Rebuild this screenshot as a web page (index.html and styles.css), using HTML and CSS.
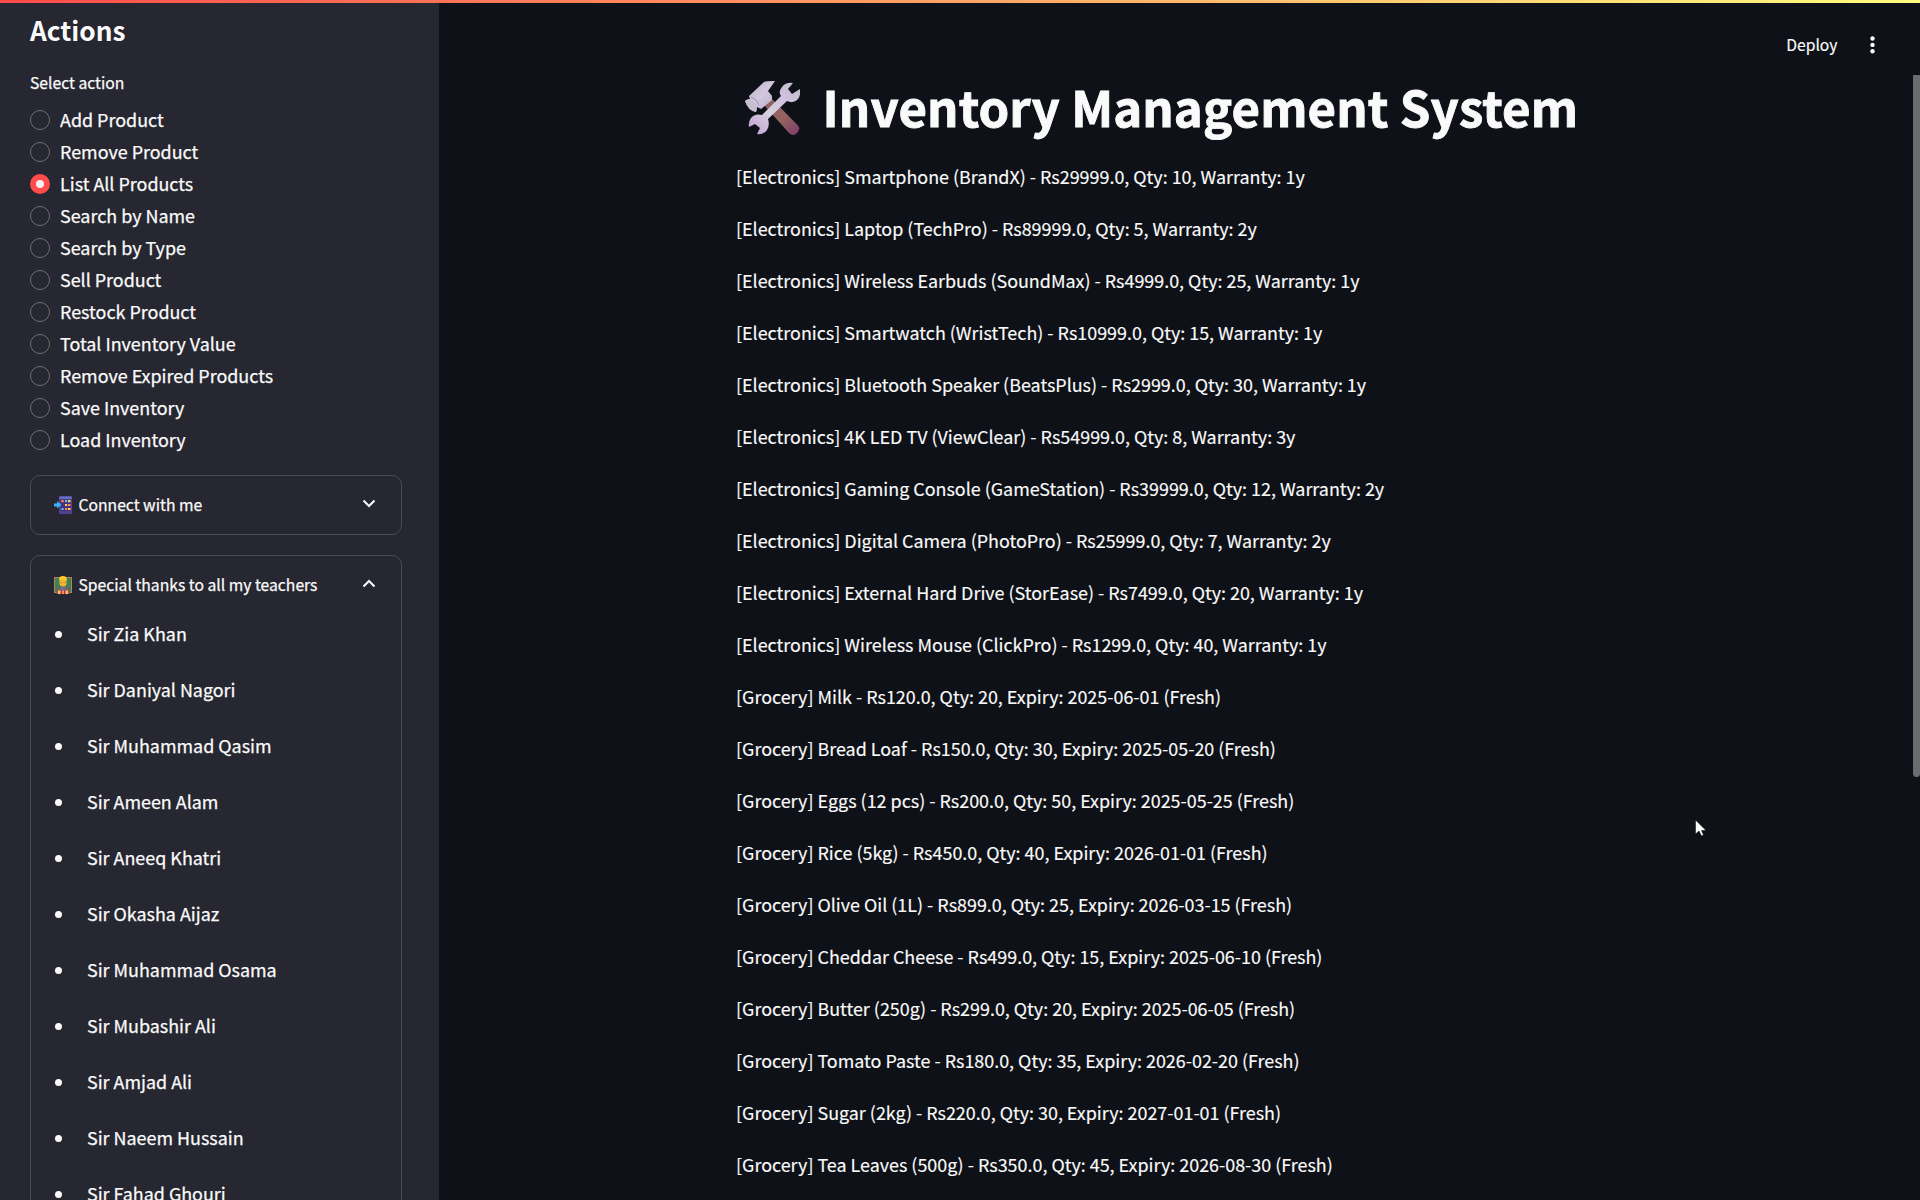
FILE: index.html
```html
<!DOCTYPE html>
<html lang="en">
<head>
<meta charset="utf-8">
<title>Inventory Management System</title>
<link rel="stylesheet" href="styles.css">
</head>
<body>
<div class="decoration"></div>
<div class="app">
  <aside class="sidebar">
    <h2 class="sidebar-title">Actions</h2>
    <p class="field-label">Select action</p>
    <div class="radios">
      <label class="radio"><i class="dot"></i><span>Add Product</span></label>
      <label class="radio"><i class="dot"></i><span>Remove Product</span></label>
      <label class="radio"><i class="dot checked"></i><span>List All Products</span></label>
      <label class="radio"><i class="dot"></i><span>Search by Name</span></label>
      <label class="radio"><i class="dot"></i><span>Search by Type</span></label>
      <label class="radio"><i class="dot"></i><span>Sell Product</span></label>
      <label class="radio"><i class="dot"></i><span>Restock Product</span></label>
      <label class="radio"><i class="dot"></i><span>Total Inventory Value</span></label>
      <label class="radio"><i class="dot"></i><span>Remove Expired Products</span></label>
      <label class="radio"><i class="dot"></i><span>Save Inventory</span></label>
      <label class="radio"><i class="dot"></i><span>Load Inventory</span></label>
    </div>
    <section class="expander">
      <div class="summary">
        <svg class="emoji" viewBox="0 0 18 18">
          <rect x="5" y="0" width="13" height="18" rx="1" fill="#54408f"/>
          <rect x="5.5" y="0.5" width="12" height="2.5" fill="#6470c4"/>
          <rect x="7" y="3.5" width="10" height="11.5" fill="#43317c"/>
          <path fill="#ff8a4c" d="M7.5 4h2.2v2.2H7.5zM14 8h2.5v2H14zM11 12h2.2v2H11z"/>
          <path fill="#ffd05a" d="M14 4h2.5v2.2H14zM11 8h2.2v2H11zM14 12h2.5v2H14z"/>
          <path fill="#54bdf5" d="M11 4h2.2v2.2H11zM7.5 12h2.2v2H7.5z"/>
          <path fill="#36b3f5" d="M0 7.500h3V5l4.500 4L3 12.500V10.500H0z"/>
        </svg>
        <span class="summary-text">Connect with me</span>
        <svg class="chevron" viewBox="0 0 14 9"><path d="M1.500 1.500 7 7l5.500-5.500"/></svg>
      </div>
    </section>
    <section class="expander open">
      <div class="summary">
        <svg class="emoji" viewBox="0 0 18 18">
          <rect x="0.5" y="1.500" width="17" height="15" fill="#388354" stroke="#bd7d59"/>
          <path d="M2.500 18v-4q0-3 4-3.500h5q4 .5 4 3.500v4z" fill="#815b61"/>
          <path d="M6 11h6l-1 4H7z" fill="#68738f"/>
          <rect x="5.500" y="2" width="7" height="8.500" rx="3.200" fill="#f5b52e"/>
          <path d="M5 5Q4.500 0 9 0t4 5L12 3.500H6z" fill="#ffc928"/>
          <path d="M6 6h2.500v1.200H6zM9.500 6H12v1.200H9.500z" fill="#cf9540"/>
          <path d="M6.500 14.500h5V18h-5z" fill="#d51480"/>
          <path d="M4 14.500h2.500V18H4zM8.300 14.500h1.400V18H8.300zM11.500 14.500H14V18h-2.500z" fill="#ffcb40"/>
        </svg>
        <span class="summary-text">Special thanks to all my teachers</span>
        <svg class="chevron" viewBox="0 0 14 9"><path d="M1.500 7.500 7 2l5.500 5.500"/></svg>
      </div>
      <ul class="teachers">
        <li><span>Sir Zia Khan</span></li>
        <li><span>Sir Daniyal Nagori</span></li>
        <li><span>Sir Muhammad Qasim</span></li>
        <li><span>Sir Ameen Alam</span></li>
        <li><span>Sir Aneeq Khatri</span></li>
        <li><span>Sir Okasha Aijaz</span></li>
        <li><span>Sir Muhammad Osama</span></li>
        <li><span>Sir Mubashir Ali</span></li>
        <li><span>Sir Amjad Ali</span></li>
        <li><span>Sir Naeem Hussain</span></li>
        <li><span>Sir Fahad Ghouri</span></li>
      </ul>
    </section>
  </aside>
  <main class="main">
    <header class="toolbar">
      <span class="deploy">Deploy</span>
      <svg class="kebab" viewBox="0 0 5 18"><circle cx="2.500" cy="2.500" r="2.200"/><circle cx="2.500" cy="8.900" r="2.200"/><circle cx="2.500" cy="15.300" r="2.200"/></svg>
    </header>
    <div class="content">
      <h1 class="title">
        <svg class="tools" viewBox="0 0 56 56">
          <defs>
            <linearGradient id="handle" x1="0" y1="0" x2="1" y2="1"><stop offset="0" stop-color="#8c6164"/><stop offset=".55" stop-color="#94645f"/><stop offset="1" stop-color="#7d3b69"/></linearGradient>
            <linearGradient id="steel" x1="0" y1="0" x2="1" y2="1"><stop offset="0" stop-color="#b5aec3"/><stop offset=".5" stop-color="#d3c9de"/><stop offset="1" stop-color="#b9a4c9"/></linearGradient>
            <linearGradient id="wrench" x1="1" y1="0" x2="0" y2="1"><stop offset="0" stop-color="#c1bec8"/><stop offset=".3" stop-color="#d0c0df"/><stop offset=".6" stop-color="#d7d2df"/><stop offset="1" stop-color="#c09ad3"/></linearGradient>
          </defs>
          <path d="M19 24 26 17 54 45.500Q57 49 53 53t-8 0z" fill="url(#handle)"/>
          <path d="M20 2Q22 1 31 1L24 11l4 5v4L17 29l-4-2-1 5Q5 30 1 21l5-2-1-3z" fill="url(#steel)"/>
          <path d="M1 21q4-4 8 0t4 8l-1 3Q4 31 1 21z" fill="#c6bfd0"/>
          <path d="M7 17q6 2 8 8" fill="none" stroke="#9c94ac"/>
          <path d="M49 3Q42 2 38 7q-4 5-1 9L18 35q-7-2-11 3-3 4-2 9l6-3 5 4-3 6q7 1 10-4t1-11L43 21q7 3 11-2 3-4 2-10l-8 5-4-5z" fill="url(#wrench)"/>
        </svg>
        <span class="title-text">Inventory Management System</span>
      </h1>
      <div class="products">
        <p>[Electronics] Smartphone (BrandX) - Rs29999.0, Qty: 10, Warranty: 1y</p>
        <p>[Electronics] Laptop (TechPro) - Rs89999.0, Qty: 5, Warranty: 2y</p>
        <p>[Electronics] Wireless Earbuds (SoundMax) - Rs4999.0, Qty: 25, Warranty: 1y</p>
        <p>[Electronics] Smartwatch (WristTech) - Rs10999.0, Qty: 15, Warranty: 1y</p>
        <p>[Electronics] Bluetooth Speaker (BeatsPlus) - Rs2999.0, Qty: 30, Warranty: 1y</p>
        <p>[Electronics] 4K LED TV (ViewClear) - Rs54999.0, Qty: 8, Warranty: 3y</p>
        <p>[Electronics] Gaming Console (GameStation) - Rs39999.0, Qty: 12, Warranty: 2y</p>
        <p>[Electronics] Digital Camera (PhotoPro) - Rs25999.0, Qty: 7, Warranty: 2y</p>
        <p>[Electronics] External Hard Drive (StorEase) - Rs7499.0, Qty: 20, Warranty: 1y</p>
        <p>[Electronics] Wireless Mouse (ClickPro) - Rs1299.0, Qty: 40, Warranty: 1y</p>
        <p>[Grocery] Milk - Rs120.0, Qty: 20, Expiry: 2025-06-01 (Fresh)</p>
        <p>[Grocery] Bread Loaf - Rs150.0, Qty: 30, Expiry: 2025-05-20 (Fresh)</p>
        <p>[Grocery] Eggs (12 pcs) - Rs200.0, Qty: 50, Expiry: 2025-05-25 (Fresh)</p>
        <p>[Grocery] Rice (5kg) - Rs450.0, Qty: 40, Expiry: 2026-01-01 (Fresh)</p>
        <p>[Grocery] Olive Oil (1L) - Rs899.0, Qty: 25, Expiry: 2026-03-15 (Fresh)</p>
        <p>[Grocery] Cheddar Cheese - Rs499.0, Qty: 15, Expiry: 2025-06-10 (Fresh)</p>
        <p>[Grocery] Butter (250g) - Rs299.0, Qty: 20, Expiry: 2025-06-05 (Fresh)</p>
        <p>[Grocery] Tomato Paste - Rs180.0, Qty: 35, Expiry: 2026-02-20 (Fresh)</p>
        <p>[Grocery] Sugar (2kg) - Rs220.0, Qty: 30, Expiry: 2027-01-01 (Fresh)</p>
        <p>[Grocery] Tea Leaves (500g) - Rs350.0, Qty: 45, Expiry: 2026-08-30 (Fresh)</p>
      </div>
    </div>
    <div class="scroll-thumb"></div>
  </main>
</div>
<svg class="cursor" viewBox="0 0 12 18"><path d="M.5 1v14l3.500-3 2.500 5 2-1-2-4.500H11z" fill="#fff" stroke="#05070b" stroke-width=".5"/></svg>
</body>
</html>
```
FILE: styles.css
```css
* { box-sizing: border-box; }
body {
  margin: 0;
  height: 1200px;
  overflow: hidden;
  background: #0e1117;
  color: #fafafa;
  font-family: "Noto Sans CJK SC", "Noto Sans", sans-serif;
  font-size: 17.910px;
  line-height: 32px;
  -webkit-text-stroke: 0.15px #fafafa;
}
h1, h2, p, ul { margin: 0; padding: 0; }

.decoration {
  position: absolute;
  z-index: 2;
  top: 0;
  left: 0;
  width: 100%;
  height: 3px;
  background: linear-gradient(90deg, #ff4b4b, #fffd80);
}
.app { display: flex; height: 1200px; overflow: hidden; }

.sidebar {
  flex: none;
  width: 439px;
  padding: 12px 37px 0 30px;
  background: #262730;
  -webkit-text-stroke-width: 0.25px;
}
.sidebar-title { font-size: 26.200px; font-weight: 700; line-height: 36px; -webkit-text-stroke-width: 0; }
.field-label { margin-top: 20px; font-size: 15.700px; line-height: 30px; }
.radios { margin-top: 6px; }
.radio { display: flex; align-items: center; gap: 10px; height: 32px; }
.radio span, .teachers span { padding-bottom: 2px; }
.dot {
  width: 20px;
  height: 20px;
  border: 1px solid #6b6c74;
  border-radius: 50%;
}
.dot.checked { border: 6px solid #ff4b4b; background: #f0f2f6; }

.expander {
  width: 372px;
  height: 60px;
  margin-top: 19px;
  border: 1px solid #4b4c54;
  border-radius: 10px;
}
.expander.open { height: 800px; margin-top: 20px; }
.summary {
  display: flex;
  align-items: center;
  height: 58px;
  padding: 0 25.500px 0 23px;
  font-size: 15.700px;
}
.emoji { width: 18px; height: 18px; margin-right: 6.500px; }
.chevron { width: 14px; height: 9px; margin: 0 0 3px auto; fill: none; stroke: #fafafa; stroke-width: 2; }
.teachers { padding: 4px 0 0 24px; list-style: none; }
.teachers li { display: flex; align-items: center; gap: 25px; height: 32px; margin-bottom: 24px; }
.teachers li::before { content: ""; width: 7px; height: 7px; border-radius: 50%; background: #fafafa; }

.main { position: relative; flex: 1; }
.toolbar {
  display: flex;
  align-items: center;
  justify-content: flex-end;
  gap: 32.500px;
  height: 75px;
  padding: 15px 45px 0 0;
  font-size: 15.700px;
}
.kebab { width: 5px; height: 18px; fill: #fafafa; }
.content { padding-left: 297px; }
.title {
  display: flex;
  align-items: center;
  height: 66px;
  padding-left: 8px;
  font-size: 49.100px;
  font-weight: 700;
  line-height: 66px;
  -webkit-text-stroke-width: 0.9px;
}
.title-text { padding-bottom: 5px; letter-spacing: 0.120px; }
.tools { width: 56px; height: 56px; margin-right: 22.500px; }
.products { padding-top: 19px; }
.products p { height: 32px; margin-bottom: 20px; white-space: nowrap; }
.scroll-thumb { position: absolute; top: 75px; right: 0; width: 7px; height: 702px; border-radius: 0 0 4px 4px; background: #6b6c70; }
.cursor { position: absolute; left: 1695px; top: 819px; width: 12px; height: 18px; }
```
